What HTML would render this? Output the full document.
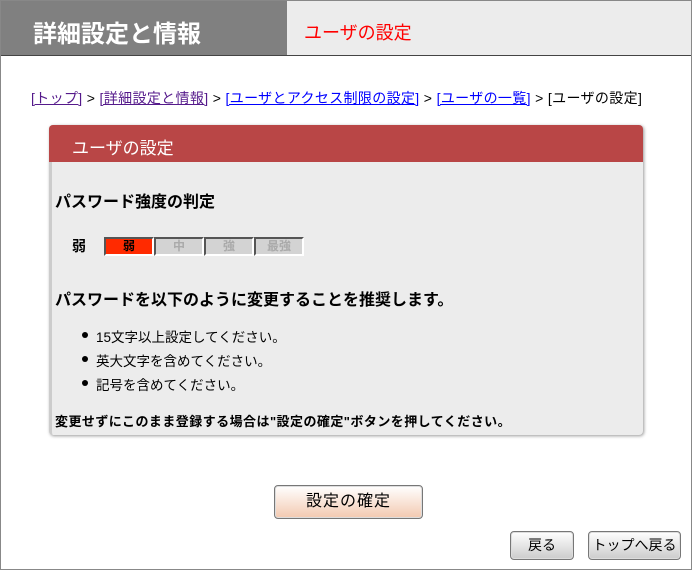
<!DOCTYPE html>
<html><head><meta charset="utf-8"><style>
*{margin:0;padding:0;box-sizing:border-box}
body{width:692px;height:570px;background:#fff;font-family:"Liberation Sans","Noto Sans CJK JP",sans-serif;position:relative;overflow:hidden}
.frame{position:absolute;left:0;top:0;width:692px;height:570px;border:1px solid #888}
.h1{position:absolute;left:1px;top:1px;width:286px;height:55px;background:#808080;color:#fff;font-size:24px;font-weight:bold;padding:13px 0 0 32px;white-space:nowrap}
.h2{position:absolute;left:287px;top:1px;width:404px;height:55px;background:#ececec;color:#f00;font-size:18px;padding:18px 0 0 17px;white-space:nowrap}
.hl{position:absolute;left:1px;top:55px;width:690px;height:1px;background:#444}
.bc{position:absolute;left:31px;top:88px;font-size:14px;letter-spacing:0.35px;color:#000;white-space:nowrap}
.bc a{color:#00f;text-decoration:underline}
.bc a.v{color:#551a8b}
.panel{position:absolute;left:49px;top:125px;width:594px;height:310px;background:#ececec;border-left:3px solid #ccc;border-radius:4px;box-shadow:1px 1px 3px #999}
.ph{height:37px;background:#b94646;color:#fff;font-size:17px;padding:9px 0 0 23px;border-radius:4px 4px 0 0;margin-left:-3px}
.t1{position:absolute;left:3px;top:63px;font-size:16px;font-weight:bold;white-space:nowrap}
.w{position:absolute;left:20px;top:111px;font-size:14px;font-weight:bold}
.bar{position:absolute;left:52px;top:112px;display:flex}
.bar div{width:50px;height:19px;border:2px solid;border-color:#555 #fff #fff #555;background:#d3d3d3;color:#aaa;font-size:12px;font-weight:bold;text-align:center;line-height:15px}
.bar .r{background:#ff2a00;color:#000}
.t2{position:absolute;left:3px;top:161px;font-size:16px;font-weight:bold;white-space:nowrap}
ul{position:absolute;left:30px;top:201px;font-size:13.5px;list-style:none;white-space:nowrap}
li{height:24px;position:relative;padding-left:14px}
li:before{content:"";position:absolute;left:0;top:6px;width:6px;height:6px;border-radius:50%;background:#000}
.t3{position:absolute;left:3px;top:286px;font-size:13px;font-weight:bold;white-space:nowrap;letter-spacing:0.45px}
.btn{position:absolute;border:1px solid #777;border-radius:4px;box-shadow:0 0 0 1px #ddd inset;text-align:center;font-size:14px;white-space:nowrap}
</style></head><body>
<div class="frame"></div>
<div class="h1">詳細設定と情報</div>
<div class="h2">ユーザの設定</div>
<div class="hl"></div>
<div class="bc"><a class="v">[トップ]</a> &gt; <a class="v">[詳細設定と情報]</a> &gt; <a>[ユーザとアクセス制限の設定]</a> &gt; <a>[ユーザの一覧]</a> &gt; [ユーザの設定]</div>
<div class="panel">
<div class="ph">ユーザの設定</div>
<div class="t1">パスワード強度の判定</div>
<div class="w">弱</div>
<div class="bar"><div class="r">弱</div><div>中</div><div>強</div><div>最強</div></div>
<div class="t2">パスワードを以下のように変更することを推奨します。</div>
<ul><li>15文字以上設定してください。</li><li>英大文字を含めてください。</li><li>記号を含めてください。</li></ul>
<div class="t3">変更せずにこのまま登録する場合は"設定の確定"ボタンを押してください。</div>
</div>
<div class="btn" style="left:274px;top:485px;width:149px;height:34px;line-height:32px;font-size:16px;letter-spacing:1px;background:linear-gradient(#fff,#f3c9b0)">設定の確定</div>
<div class="btn" style="left:510px;top:531px;width:64px;height:29px;line-height:27px;background:linear-gradient(#fff,#ccc)">戻る</div>
<div class="btn" style="left:588px;top:531px;width:93px;height:29px;line-height:27px;background:linear-gradient(#fff,#ccc)">トップへ戻る</div>
</body></html>
